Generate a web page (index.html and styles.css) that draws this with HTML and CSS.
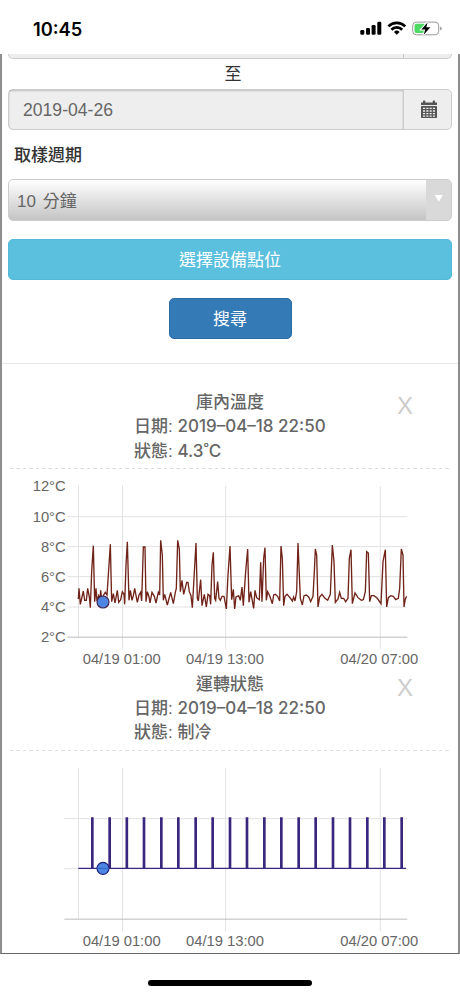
FILE: index.html
```html
<!DOCTYPE html>
<html lang="zh-Hant">
<head>
  <meta charset="UTF-8" />
  <meta name="viewport" content="width=device-width, initial-scale=1" />
  <title>歷史曲線</title>
  <link rel="stylesheet" href="styles.css">
</head>
<body>

  <header class="statusbar">
    <span class="clock">10:45</span>
    <svg class="status-icons" width="82" height="18" viewBox="0 0 82 18">
      <!-- signal -->
      <rect x="0.3" y="11" width="4" height="4.7" rx="1.2"/>
      <rect x="6" y="9" width="4" height="6.7" rx="1.2"/>
      <rect x="11.6" y="6" width="4" height="9.7" rx="1.2"/>
      <rect x="17.3" y="2.7" width="4" height="13" rx="1.2"/>
      <!-- wifi -->
      <g fill="none" stroke="#000" stroke-width="2.7">
        <path d="M28.4 7.4a12 12 0 0 1 16.8 0"/>
        <path d="M31.4 10.7a7.6 7.6 0 0 1 10.8 0"/>
      </g>
      <path d="M36.8 15.8l-2.8-2.9a4.1 4.1 0 0 1 5.6 0z"/>
      <!-- battery -->
      <rect x="52.7" y="3.1" width="26" height="12.7" rx="3.6" fill="#fff" stroke="#999" stroke-width="1"/>
      <path d="M80.1 7.4v4.2q1.6-.6 1.6-2.1t-1.6-2.1z" fill="#999"/>
      <rect x="54.5" y="4.8" width="11" height="9.3" rx="2" fill="#4cd964"/>
      <path d="M67.6 3.5l-6.3 7h3.9l-1.5 5.2 6.7-7.4h-4.1z" stroke="#fff" stroke-width="2" paint-order="stroke"/>
    </svg>
  </header>

  <main class="panel">
    <form class="search">
      <div class="group group-cut"><span class="field"></span><span class="addon"></span></div>
      <div class="to">至</div>
      <div class="group">
        <span class="field">2019-04-26</span>
        <span class="addon">
          <svg width="18" height="18" viewBox="0 0 18 18" fill="#555">
            <path d="M1 2.4h2V1.2q0-.7.9-.7h.5q.9 0 .9.7v1.2h7.4V1.2q0-.7.9-.7h.5q.9 0 .9.7v1.2h2V5H1z"/>
            <rect x="1" y="6" width="16" height="12" rx=".8"/>
            <path d="M3 8.3h2.1M6.3 8.3h2.1M9.6 8.3h2.1M12.9 8.3H15M3 11h2.1M6.3 11h2.1M9.6 11h2.1M12.9 11H15M3 13.6h2.1M6.3 13.6h2.1M9.6 13.6h2.1M12.9 13.6H15M3 16.1h2.1M6.3 16.1h2.1M9.6 16.1h2.1M12.9 16.1H15" stroke="#eee" stroke-width="1.3"/>
          </svg>
        </span>
      </div>
      <label class="label">取樣週期</label>
      <div class="select">
        <span class="select-text">10 分鐘</span>
        <span class="arrow"><svg width="10" height="9" viewBox="0 0 10 9"><path d="M0 .5h9.6L4.8 8.5z" fill="#fff" stroke="#ccc" stroke-width=".5"/></svg></span>
      </div>
      <button type="button" class="btn btn-info">選擇設備點位</button>
      <button type="button" class="btn btn-primary">搜尋</button>
    </form>

    <section class="chart">
      <div class="chart-head">
        <div class="info">
          <div class="title">庫內溫度</div>
          <div>日期: <span class="num">2019–04–18 22:50</span></div>
          <div>狀態: <span class="num">4.3˚C</span></div>
        </div>
        <span class="close">X</span>
      </div>
      <svg class="plot" width="456" height="202" viewBox="6 -18 1368 606">
        <path class="grid" d="M202 125H1222M202 215H1222M202 305H1222M202 396H1222M235.500 33V486M367.500 33V523M677 33V523M1141 33V523"/>
        <path class="axis" d="M202 486.500H1222"/>
        <polyline class="temp" points="235,372 237,340 241,388 250,348 254,376 259,376 263,340 268,366 271,398 275,290 280,212 284,380 288,340 291,378 296,362 300,374 302,346 306,380 311,360 316,352 321,360 325,300 331,208 335,380 340,356 345,384 352,346 356,382 362,374 367,350 372,358 374,388 378,270 382,200 387,376 391,346 396,376 400,362 404,340 412,382 417,360 422,352 425,378 430,216 435,216 438,380 442,350 447,366 450,384 456,352 463,364 468,384 475,352 479,360 482,196 487,240 490,376 494,358 502,390 512,352 520,386 526,352 529,340 533,196 538,222 541,350 546,316 551,358 560,322 564,322 568,350 573,362 577,398 582,310 588,204 592,370 595,378 602,314 606,392 613,358 619,396 624,358 629,362 632,388 636,270 640,232 644,370 647,376 653,320 657,370 661,376 666,364 672,364 679,402 684,300 690,213
          695,374 700,343 704,402 708,366 716,362 721,376 726,336 730,392 737,290 743,222 747,382 752,350 761,400 765,346 770,368 778,374 782,262 786,380 791,250 795,218 799,376 803,350 809,362 817,386 821,360 826,358 833,364 839,378 843,213 847,250 851,392 855,364 861,358 870,368 877,378 881,366 885,378 890,350 894,204 901,370 907,390 912,362 919,360 926,366 932,380 939,364 943,290 946,222 950,240 954,396 959,366 966,358 975,370 983,376 991,358 997,210 1002,260 1006,382 1014,372 1019,352 1024,370 1031,370 1037,380 1044,370 1048,250 1053,224 1057,386 1065,354 1074,368 1084,376 1090,374 1096,350 1100,230 1105,234 1109,380 1114,362 1122,362 1132,370 1143,386 1149,260 1156,224 1160,396 1165,368 1172,362 1180,364 1187,374 1195,370 1199,340 1204,222 1209,240 1212,396 1216,372 1220,364"/>
        <circle class="dot dot-temp" cx="309" cy="381" r="18"/>
        <g class="ylabels">
          <text x="197" y="49">12°C</text>
          <text x="197" y="140">10°C</text>
          <text x="197" y="230">8°C</text>
          <text x="197" y="320">6°C</text>
          <text x="197" y="411">4°C</text>
          <text x="197" y="501">2°C</text>
        </g>
        <g class="xlabels">
          <text x="365" y="567">04/19 01:00</text>
          <text x="675" y="567">04/19 13:00</text>
          <text x="1138" y="567">04/20 07:00</text>
        </g>
      </svg>
    </section>

    <section class="chart">
      <div class="chart-head">
        <div class="info">
          <div class="title">運轉狀態</div>
          <div>日期: <span class="num">2019–04–18 22:50</span></div>
          <div>狀態: 制冷</div>
        </div>
        <span class="close">X</span>
      </div>
      <svg class="plot" width="456" height="202" viewBox="6 -18 1368 606">
        <path class="grid" d="M193 185H1222M193 335H1222M235.500 33V486M367.500 33V523M677 33V523M1141 33V523"/>
        <path class="axis" d="M193 486.500H1222"/>
        <path class="pulse" d="M277 181v153M329 181v153M380.500 181v153M432 181v153M484 181v153M535 181v153M587 181v153M638 181v153M690 181v153M741 181v153M793 181v153M844 181v153M896 181v153M947 181v153M999 181v153M1050 181v153M1102 181v153M1153 181v153M1205 181v153"/>
        <path class="baseline" d="M235 334H1218"/>
        <circle class="dot" cx="309" cy="334" r="18"/>
        <path class="dot-line" d="M291 334h36"/>
        <g class="xlabels">
          <text x="365" y="567">04/19 01:00</text>
          <text x="675" y="567">04/19 13:00</text>
          <text x="1138" y="567">04/20 07:00</text>
        </g>
      </svg>
    </section>
  </main>

  <div class="home"></div>

</body>
</html>
```
FILE: styles.css
```css
* {
  box-sizing: border-box;
}

body {
  margin: 0;
  width: 460px;
  height: 996px;
  overflow: hidden;
  background: #fff;
  color: #333;
  font-family: "Liberation Sans", "Noto Sans CJK TC", sans-serif;
  font-size: 17px;
}

.statusbar {
  display: flex;
  justify-content: space-between;
  height: 54px;
  padding: 19px 18px 0 33px;
}

.clock {
  color: #000;
  font-family: Inter, sans-serif;
  font-size: 18.3px;
  font-weight: 600;
  line-height: 20px;
}

.panel {
  height: 900px;
  border: solid #8e8e8e;
  border-width: 0 2px 1px;
  border-bottom-color: #666;
  overflow: hidden;
}

.search {
  display: flex;
  flex-direction: column;
  height: 310px;
  padding: 0 6px;
  border-bottom: 1px solid #e8e8e8;
}

.group {
  display: flex;
  flex: none;
  height: 41px;
  border: 1px solid #ccc;
  border-radius: 5px;
  background: #eee;
}

.group-cut {
  height: 5px;
  border-top: 0;
  border-radius: 0 0 5px 5px;
}

.field {
  flex: 1;
  padding-left: 14px;
  color: #666;
  font-size: 17.6px;
  line-height: 40px;
  border-right: 1px solid #ccc;
  box-shadow: inset 0 1px 2px rgba(0, 0, 0, 0.2);
}

.group-cut .field {
  box-shadow: none;
}

.addon {
  display: flex;
  align-items: center;
  justify-content: center;
  width: 47px;
  padding: 0 0 2px 3px;
}

.to {
  height: 30px;
  padding-top: 1px;
  padding-left: 6px;
  line-height: 30px;
  text-align: center;
}

.label {
  height: 49px;
  padding-top: 1px;
  padding-left: 6px;
  font-weight: 500;
  line-height: 50px;
}

.select {
  display: flex;
  flex: none;
  height: 42px;
  border: 1px solid #ccc;
  border-radius: 5px;
  background: linear-gradient(#fff, #c4c4c4);
  overflow: hidden;
}

.select-text {
  flex: 1;
  padding-top: 1px;
  padding-left: 8px;
  color: #666;
  line-height: 41px;
  word-spacing: 2px;
}

.arrow {
  display: flex;
  justify-content: center;
  width: 25px;
  padding-top: 14px;
  background: #d9d9d9;
}

.btn {
  flex: none;
  height: 41px;
  margin-top: 18px;
  padding: 2px 0 0;
  border: 1px solid #52bbdb;
  border-radius: 5px;
  background: #5bc0de;
  color: #fff;
  font-family: inherit;
  font-size: 17px;
  line-height: 37px;
}

.btn-primary {
  align-self: center;
  width: 123px;
  border-color: #2e6da4;
  background: #337ab7;
}

.chart-head {
  display: flex;
  justify-content: space-between;
  height: 80px;
  margin: 0 8px;
  padding-right: 37px;
  padding-left: 124px;
  background: repeating-linear-gradient(90deg, #ddd 0 3.5px, transparent 3.5px 6.4px) bottom / 100% 1px no-repeat;
}

.chart:first-of-type {
  margin-top: 25px;
}

.info {
  width: 192px;
  color: #666;
  font-weight: 500;
  line-height: 24px;
  white-space: nowrap;
}

.title {
  height: 25px;
  padding-top: 2px;
  text-align: center;
}

.num {
  font-family: Inter, sans-serif;
  font-size: 17px;
}

.close {
  color: #ccc;
  font-size: 24px;
  line-height: 34px;
}

.plot {
  display: block;
  font-size: 44.3px;
}

.grid {
  fill: none;
  stroke: #e2e2e2;
  stroke-width: 3;
}

.axis {
  stroke: #bbb;
  stroke-width: 3;
}

.temp {
  fill: none;
  stroke: #702318;
  stroke-width: 4;
}

.pulse {
  stroke: #39267f;
  stroke-width: 8;
}

.baseline {
  stroke: #39267f;
  stroke-width: 4;
}

.dot {
  fill: #4c86e2;
  stroke: #20207c;
  stroke-width: 3.5;
}

.dot-temp {
  stroke: #45234d;
}

.dot-line {
  stroke: #3564c0;
  stroke-width: 3;
}

.ylabels {
  fill: #666;
  text-anchor: end;
}

.xlabels {
  fill: #666;
  text-anchor: middle;
}

.home {
  width: 164px;
  height: 6px;
  margin: 26px auto 0;
  border-radius: 3px;
  background: #000;
}
```
